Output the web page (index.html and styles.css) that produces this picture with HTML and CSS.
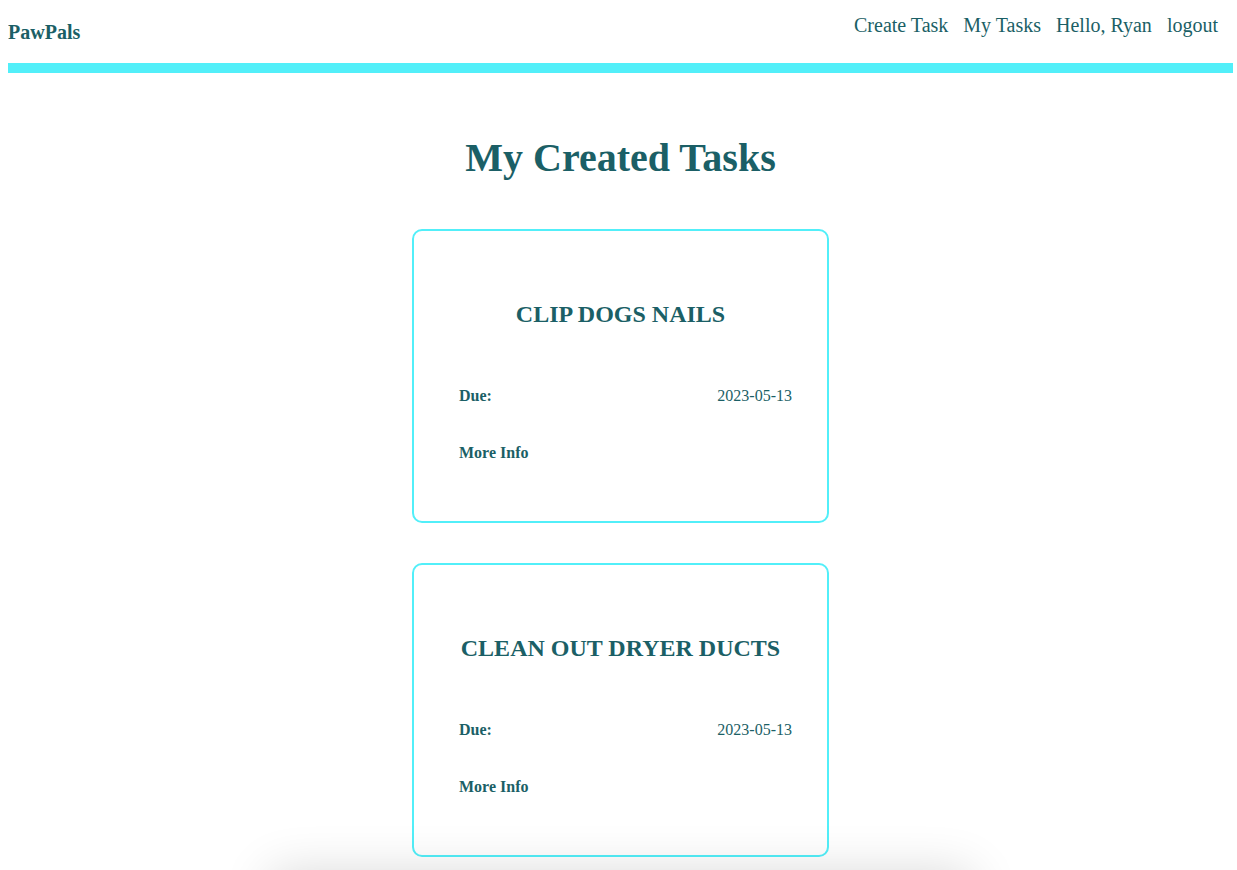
FILE: index.html
```html
<!DOCTYPE html>
<html lang="en">
<head>
<meta charset="utf-8">
<title>PawPals - My Created Tasks</title>
<link rel="stylesheet" href="styles.css">
</head>
<body>
<header class="site-header">
  <a class="logo" href="#">PawPals</a>
  <nav class="nav">
    <a href="#">Create Task</a>
    <a href="#">My Tasks</a>
    <span>Hello, Ryan</span>
    <a href="#">logout</a>
  </nav>
</header>
<div class="bar"></div>
<main class="main">
  <h1 class="page-title">My Created Tasks</h1>
  <div class="cards">
    <div class="card">
      <h2 class="card-title">CLIP DOGS NAILS</h2>
      <div class="row"><span class="label">Due:</span><span class="value">2023-05-13</span></div>
      <a class="more" href="#">More Info</a>
    </div>
    <div class="card">
      <h2 class="card-title">CLEAN OUT DRYER DUCTS</h2>
      <div class="row"><span class="label">Due:</span><span class="value">2023-05-13</span></div>
      <a class="more" href="#">More Info</a>
    </div>
    <div class="footer-box"></div>
  </div>
</main>
</body>
</html>
```
FILE: styles.css
```css
html, body {
  background: #ffffff;
}
body {
  margin: 8px 4px 8px 8px;
  font-family: "Liberation Serif", "Times New Roman", serif;
  color: #1b5f66;
  overflow: hidden;
}
a {
  color: inherit;
  text-decoration: none;
}
.site-header {
  display: flex;
  justify-content: space-between;
  align-items: flex-start;
  height: 55px;
}
.logo {
  font-weight: bold;
  font-size: 20px;
  line-height: 22px;
  margin-top: 13px;
}
.nav {
  display: flex;
  gap: 15px;
  font-size: 20px;
  line-height: 22px;
  margin-top: 6px;
  padding-right: 15px;
}
.bar {
  height: 10px;
  background: #52eff9;
}
.main {
  display: flex;
  flex-direction: column;
  align-items: center;
}
.page-title {
  font-size: 40px;
  line-height: 46px;
  margin: 62px 0 0;
  font-weight: bold;
}
.cards {
  display: flex;
  flex-direction: column;
  align-items: center;
  gap: 40px;
  margin-top: 48px;
}
.card {
  box-sizing: border-box;
  width: 417px;
  height: 294px;
  border: 2px solid #52eff9;
  border-radius: 10px;
  padding: 69px 35px 0 45px;
  display: flex;
  flex-direction: column;
  background: #fff;
}
.card-title {
  font-size: 24px;
  line-height: 28px;
  margin: 0;
  text-align: center;
  margin-left: -10px;
}
.row {
  display: flex;
  justify-content: space-between;
  font-size: 16px;
  line-height: 20px;
  margin-top: 58px;
}
.label {
  font-weight: bold;
}
.more {
  font-weight: bold;
  font-size: 16px;
  line-height: 20px;
  margin-top: 37px;
}
.footer-box {
  width: 700px;
  height: 120px;
  margin-top: -24px;
  background: #fff;
  box-shadow: 0 0 50px rgba(0, 0, 0, 0.16);
}
```
